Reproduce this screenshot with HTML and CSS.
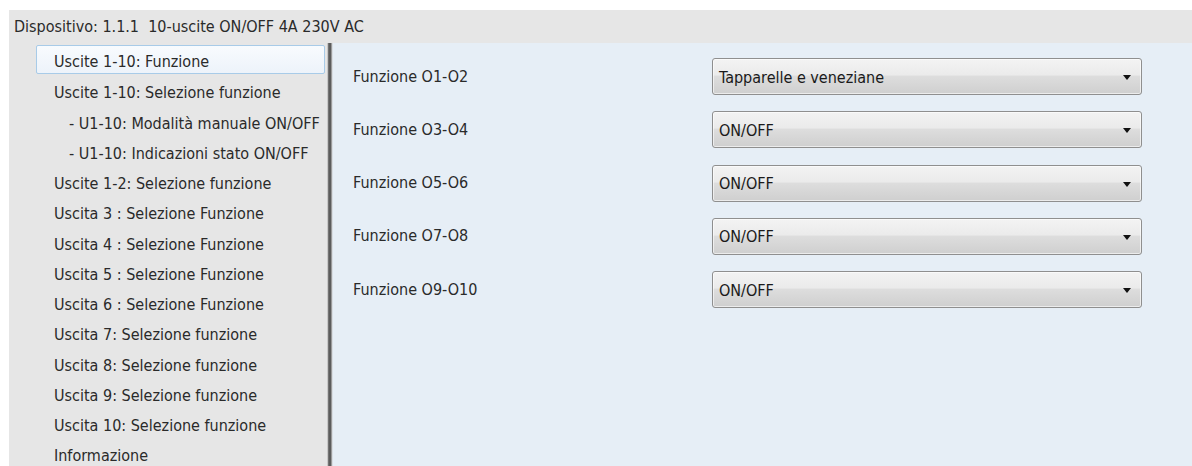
FILE: index.html
```html
<!DOCTYPE html>
<html lang="it">
<head>
<meta charset="utf-8">
<title>Parametri dispositivo</title>
<link rel="stylesheet" href="styles.css">
</head>
<body>
<div class="app">
  <div class="header">Dispositivo: 1.1.1  10-uscite ON/OFF 4A 230V AC</div>
  <div class="main">
    <ul class="nav">
      <li class="nav-item active">Uscite 1-10: Funzione</li>
      <li class="nav-item">Uscite 1-10: Selezione funzione</li>
      <li class="nav-item sub">- U1-10: Modalità manuale ON/OFF</li>
      <li class="nav-item sub">- U1-10: Indicazioni stato ON/OFF</li>
      <li class="nav-item">Uscite 1-2: Selezione funzione</li>
      <li class="nav-item">Uscita 3 : Selezione Funzione</li>
      <li class="nav-item">Uscita 4 : Selezione Funzione</li>
      <li class="nav-item">Uscita 5 : Selezione Funzione</li>
      <li class="nav-item">Uscita 6 : Selezione Funzione</li>
      <li class="nav-item">Uscita 7: Selezione funzione</li>
      <li class="nav-item">Uscita 8: Selezione funzione</li>
      <li class="nav-item">Uscita 9: Selezione funzione</li>
      <li class="nav-item">Uscita 10: Selezione funzione</li>
      <li class="nav-item">Informazione</li>
    </ul>
    <div class="splitter"></div>
    <div class="content">
      <div class="form">
        <div class="label">Funzione O1-O2</div>
        <div class="combo"><span>Tapparelle e veneziane</span><i class="arrow"></i></div>
        <div class="label">Funzione O3-O4</div>
        <div class="combo"><span>ON/OFF</span><i class="arrow"></i></div>
        <div class="label">Funzione O5-O6</div>
        <div class="combo"><span>ON/OFF</span><i class="arrow"></i></div>
        <div class="label">Funzione O7-O8</div>
        <div class="combo"><span>ON/OFF</span><i class="arrow"></i></div>
        <div class="label">Funzione O9-O10</div>
        <div class="combo"><span>ON/OFF</span><i class="arrow"></i></div>
      </div>
    </div>
  </div>
</div>
</body>
</html>
```

FILE: styles.css
```css
html, body {
  margin: 0;
  padding: 0;
  background: #ffffff;
  height: 100%;
  overflow: hidden;
}

.app {
  box-sizing: border-box;
  height: 100%;
  padding: 10px 0 0 9px;
  display: flex;
  flex-direction: column;
  font-family: "DejaVu Sans Condensed", "DejaVu Sans", sans-serif;
  font-stretch: condensed;
  font-size: 16px;
  color: #2a2a2a;
}

.header {
  height: 33px;
  line-height: 34px;
  padding-left: 5px;
  background: #e6e6e6;
  white-space: pre;
}

.main {
  flex: 1;
  display: flex;
  min-height: 0;
}

/* left navigation tree */
.nav {
  list-style: none;
  margin: 0;
  padding: 2px 2px 0 27px;
  width: 318px;
  box-sizing: border-box;
  background: #e6e6e6;
}

.nav-item {
  box-sizing: border-box;
  height: 30.25px;
  line-height: 33px;
  padding-left: 17px;
  border: 1px solid transparent;
  border-radius: 2px;
  white-space: nowrap;
}

.nav-item.sub {
  padding-left: 32px;
}

.nav-item.active {
  border-color: #a8cbe8;
  background: linear-gradient(#f8fbfe, #edf3fa);
  height: 29px;
  line-height: 31px;
  margin-bottom: 1.25px;
}

/* vertical splitter between tree and form */
.splitter {
  width: 6px;
  background: linear-gradient(to right, #c8c8c8 0, #c8c8c8 1px, #8a8a8a 1px, #5c5c5c 2px, #5c5c5c 4px, #9a9a9a 4px, #9a9a9a 5px, #d8dde2 5px);
}

.content {
  flex: 1;
  background: #e6eef6;
  padding: 15px 0 0 20px;
}

.form {
  display: grid;
  grid-template-columns: 359px 430px;
  grid-auto-rows: 37px;
  row-gap: 16.25px;
  align-items: center;
}

.label {
  color: #2a2a2a;
  padding-bottom: 1px;
}

.combo {
  box-sizing: border-box;
  height: 37px;
  display: flex;
  align-items: center;
  justify-content: space-between;
  padding: 1px 10px 0 6px;
  border: 1px solid #8f8f8f;
  border-radius: 3px;
  background: linear-gradient(#f3f3f3 0%, #ebebeb 45%, #dddddd 50%, #cfcfcf 100%);
  box-shadow: inset 0 0 0 1px rgba(255, 255, 255, 0.6);
  color: #1a1a1a;
}

.arrow {
  width: 0;
  height: 0;
  border-left: 4px solid transparent;
  border-right: 4px solid transparent;
  border-top: 5px solid #111111;
  margin-top: 1px;
}
```
